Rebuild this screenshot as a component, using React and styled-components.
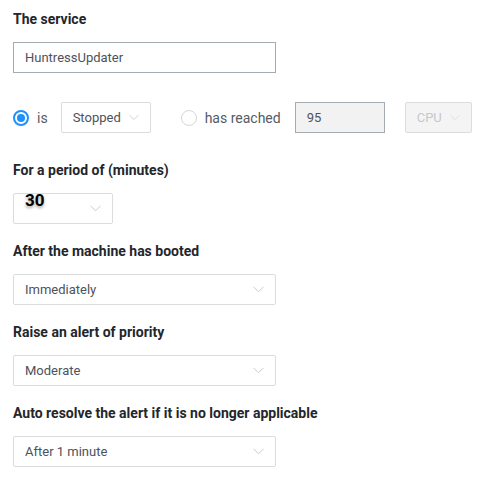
import React from "react";
import styled, { createGlobalStyle } from "styled-components";

const Global = createGlobalStyle`
  html, body { margin: 0; padding: 0; background: #fff; }
  body { font-family: Roboto, "Liberation Sans", sans-serif; }
`;

const Page = styled.div`
  padding: 9px 13px 0 13px;
  display: flex;
  flex-direction: column;
`;

const Field = styled.div`
  display: flex;
  flex-direction: column;
  margin-bottom: ${(p) => p.$mb ?? 17}px;
`;

const Label = styled.div`
  font-size: 14px;
  font-weight: 700;
  color: #23262b;
  line-height: 20px;
  margin-bottom: 13px;
  white-space: nowrap;
`;

const TextBox = styled.div`
  box-sizing: border-box;
  flex-shrink: 0;
  width: ${(p) => p.$w}px;
  height: 31px;
  margin-left: ${(p) => p.$ml ?? 0}px;
  border: 1px solid ${(p) => (p.$dark ? "#a4abb3" : "#dcdcdc")};
  background: ${(p) => (p.$bg ? p.$bg : "#fff")};
  border-radius: ${(p) => (p.$dark ? 0 : 2)}px;
  display: flex;
  align-items: center;
  padding: 0 11px;
  font-size: 13px;
  color: ${(p) => (p.$muted ? "#c6c8cc" : "#4d525b")};
  gap: 8px;
  white-space: nowrap;
`;

const Value = styled.span`
  flex: 1;
`;

const Big = styled.span`
  flex: 1;
  font-size: 17px;
  font-weight: 700;
  color: #000;
  text-shadow: 0 2px 3px rgba(0, 0, 0, 0.35);
  margin-top: -18px;
`;

const Row = styled.div`
  display: flex;
  align-items: center;
  margin-bottom: 27px;
`;

const Radio = styled.span`
  box-sizing: border-box;
  flex-shrink: 0;
  width: 16px;
  height: 16px;
  border-radius: 50%;
  border: ${(p) => (p.$on ? "2px solid #1e90ff" : "1px solid #d6d6d6")};
  display: flex;
  align-items: center;
  justify-content: center;
  margin-left: ${(p) => p.$ml}px;
  &::after {
    content: "";
    display: ${(p) => (p.$on ? "block" : "none")};
    width: 8px;
    height: 8px;
    border-radius: 50%;
    background: #1e90ff;
  }
`;

const RadioText = styled.span`
  font-size: 14px;
  color: #555b63;
  white-space: nowrap;
  flex-shrink: 0;
  margin: 0 ${(p) => p.$mr}px 0 ${(p) => p.$ml}px;
`;

const Chev = ({ muted }) => (
  <svg width="11" height="7" viewBox="0 0 11 7" fill="none">
    <path d="M0.5 0.8 L5.5 5.8 L10.5 0.8" stroke={muted ? "#dcdcdc" : "#c8cbd0"} strokeWidth="1" />
  </svg>
);

export default function App() {
  return (
    <>
      <Global />
      <Page>
        <Field $mb={29}>
          <Label>The service</Label>
          <TextBox $w={263} $dark>
            <Value>HuntressUpdater</Value>
          </TextBox>
        </Field>
        <Row>
          <Radio $on $ml={0} />
          <RadioText $ml={8} $mr={13}>is</RadioText>
          <TextBox $w={90}>
            <Value>Stopped</Value>
            <Chev />
          </TextBox>
          <Radio $ml={30} />
          <RadioText $ml={8} $mr={14}>has reached</RadioText>
          <TextBox $w={90} $dark $bg="#f2f2f2">
            <Value>95</Value>
          </TextBox>
          <TextBox $w={67} $bg="#f4f4f4" $muted $ml={20}>
            <Value>CPU</Value>
            <Chev muted />
          </TextBox>
        </Row>
        <Field>
          <Label>For a period of (minutes)</Label>
          <TextBox $w={100}>
            <Big>30</Big>
            <Chev />
          </TextBox>
        </Field>
        <Field>
          <Label>After the machine has booted</Label>
          <TextBox $w={263}>
            <Value>Immediately</Value>
            <Chev />
          </TextBox>
        </Field>
        <Field>
          <Label>Raise an alert of priority</Label>
          <TextBox $w={263}>
            <Value>Moderate</Value>
            <Chev />
          </TextBox>
        </Field>
        <Field>
          <Label>Auto resolve the alert if it is no longer applicable</Label>
          <TextBox $w={263}>
            <Value>After 1 minute</Value>
            <Chev />
          </TextBox>
        </Field>
      </Page>
    </>
  );
}
